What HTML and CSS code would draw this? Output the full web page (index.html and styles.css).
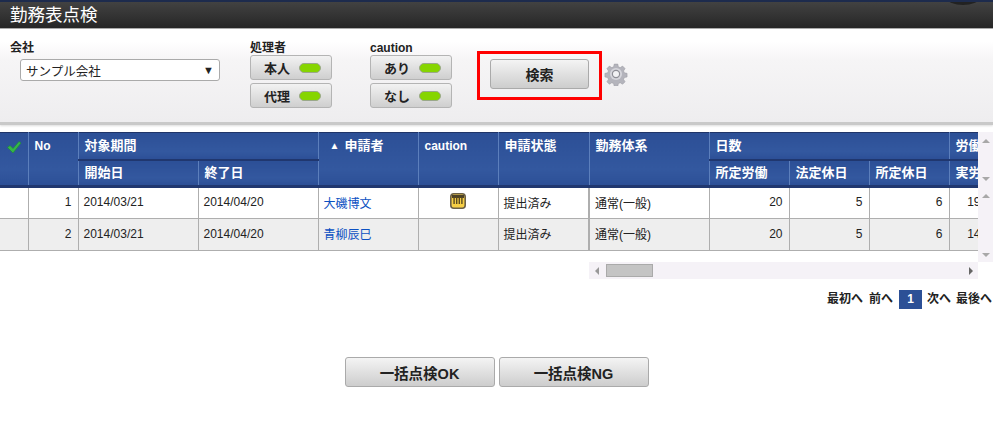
FILE: index.html
```html
<!DOCTYPE html>
<html lang="ja">
<head>
    <meta charset="UTF-8">
    <title>勤務表点検</title>
    <link rel="stylesheet" href="styles.css">
</head>
<body>
    <header class="title-bar">
        <h1 class="title">勤務表点検</h1>
        <span class="title-knob"></span>
    </header>

    <form class="filter">
        <div class="filter-group company">
            <label class="filter-label">会社</label>
            <div class="select"><span>サンプル会社</span><span class="select-arrow">▼</span></div>
        </div>
        <div class="filter-group handler">
            <label class="filter-label">処理者</label>
            <button type="button" class="toggle">本人<i class="lamp"></i></button>
            <button type="button" class="toggle">代理<i class="lamp"></i></button>
        </div>
        <div class="filter-group caution">
            <label class="filter-label">caution</label>
            <button type="button" class="toggle">あり<i class="lamp"></i></button>
            <button type="button" class="toggle">なし<i class="lamp"></i></button>
        </div>
        <div class="search-mark"><button type="button" class="btn search-btn">検索</button></div>
        <svg class="gear" width="24" height="24" viewBox="0 0 24 24" aria-label="設定">
            <path fill="#b4b4bc" stroke="#9a9aa2" stroke-width="0.6" d="M10 1h4l.6 3 2.1.9 2.6-1.7 2.8 2.8-1.7 2.6.9 2.1 3 .6v4l-3 .6-.9 2.1 1.7 2.6-2.8 2.8-2.6-1.7-2.1.9-.6 3h-4l-.6-3-2.1-.9-2.6 1.7-2.8-2.8 1.7-2.6-.9-2.1-3-.6v-4l3-.6.9-2.1-1.7-2.6 2.8-2.8 2.6 1.7 2.1-.9z" transform="translate(1.2 1.2) scale(.9)"/>
            <circle cx="12" cy="12" r="6" fill="#d6d6dc"/>
            <circle cx="12" cy="12" r="3.6" fill="#f2f2f4" stroke="#8e8e96" stroke-width="1.2"/>
        </svg>
    </form>

    <div class="grid">
        <div class="grid-clip">
            <table class="list">
                <colgroup>
                    <col class="c-check"><col class="c-no"><col class="c-date"><col class="c-date">
                    <col class="c-name"><col class="c-caution"><col class="c-state"><col class="c-system">
                    <col class="c-day"><col class="c-day"><col class="c-day"><col class="c-last">
                </colgroup>
                <thead>
                    <tr class="head-top">
                        <th rowspan="2" class="check-head">
                            <svg width="16" height="14" viewBox="0 0 16 14"><path d="M1.5 7.5l2.5-2 3 3L13 1.5l2 1.5-8 10z" fill="#35b548" stroke="#1c8a34" stroke-width=".6"/></svg>
                        </th>
                        <th rowspan="2" class="latin">No</th>
                        <th colspan="2" class="group">対象期間</th>
                        <th rowspan="2" class="name-head"><span class="sort">▲</span>申請者</th>
                        <th rowspan="2" class="latin">caution</th>
                        <th rowspan="2">申請状態</th>
                        <th rowspan="2">勤務体系</th>
                        <th colspan="3" class="group">日数</th>
                        <th class="group">労働</th>
                    </tr>
                    <tr class="head-sub">
                        <th>開始日</th><th>終了日</th>
                        <th>所定労働</th><th>法定休日</th><th>所定休日</th><th>実労</th>
                    </tr>
                </thead>
                <tbody>
                    <tr>
                        <td></td><td class="num">1</td><td>2014/03/21</td><td>2014/04/20</td>
                        <td><a href="#">大磯博文</a></td>
                        <td class="center">
                            <svg class="caution-icon" width="16" height="16" viewBox="0 0 16 16">
                                <rect x=".8" y=".8" width="14.4" height="14.4" rx="3" fill="#f7cf45" stroke="#6b6048" stroke-width="1.6"/>
                                <rect x="2" y="2" width="12" height="3" fill="#4d4226"/>
                                <path d="M3.4 4h1.4v7H3.4zM6 4h1.4v7H6zM8.6 4H10v7H8.6zM11.2 4h1.4v7h-1.4z" fill="#5a4a20"/>
                            </svg>
                        </td>
                        <td>提出済み</td><td class="thick">通常(一般)</td>
                        <td class="num">20</td><td class="num">5</td><td class="num">6</td><td class="num">19</td>
                    </tr>
                    <tr class="alt">
                        <td></td><td class="num">2</td><td>2014/03/21</td><td>2014/04/20</td>
                        <td><a href="#">青柳辰巳</a></td>
                        <td></td>
                        <td>提出済み</td><td class="thick">通常(一般)</td>
                        <td class="num">20</td><td class="num">5</td><td class="num">6</td><td class="num">14</td>
                    </tr>
                </tbody>
            </table>
        </div>
        <div class="vbar">
            <div class="vbar-part head-part"><span class="arrow up"></span><span class="arrow down"></span></div>
            <div class="vbar-part body-part"><span class="arrow up"></span><span class="arrow down"></span></div>
        </div>
    </div>

    <div class="hbar">
        <span class="arrow left"></span>
        <span class="hbar-thumb"></span>
        <span class="arrow right"></span>
    </div>

    <nav class="pager">
        <span class="page-first">最初へ</span><span>前へ</span><span class="page-now">1</span><span>次へ</span><span>最後へ</span>
    </nav>

    <div class="actions">
        <button type="button" class="btn bulk-btn">一括点検OK</button>
        <button type="button" class="btn bulk-btn">一括点検NG</button>
    </div>
</body>
</html>
```

FILE: styles.css
```css
body {
    margin: 0;
    height: 428px;
    overflow: hidden;
    background: #fff;
    color: #222;
    font-family: "Liberation Sans", "Noto Sans CJK JP", sans-serif;
    font-size: 12px;
}

button {
    font-family: inherit;
    cursor: pointer;
}

/* Title bar */
.title-bar {
    position: relative;
    height: 26px;
    border-top: 2px solid #1d2b4d;
    border-bottom: 1px solid #aaa;
    background: linear-gradient(#424242, #262626);
    overflow: hidden;
}

.title {
    margin: 0;
    padding-left: 10px;
    color: #fff;
    font-size: 17.5px;
    font-weight: normal;
    line-height: 26px;
}

.title-knob {
    position: absolute;
    top: -10px;
    left: 947px;
    width: 32px;
    height: 13px;
    border-radius: 50%;
    background: #222;
}

/* Filter panel */
.filter {
    display: flex;
    align-items: flex-start;
    height: 93px;
    border-bottom: 3px solid #c9c9c9;
    background: linear-gradient(#fff 12px, #f6f5f6 30px, #eeedef);
    box-shadow: 0 1px 2px #ddd;
}

.filter-group {
    display: flex;
    flex-direction: column;
    align-items: flex-start;
    padding-top: 12px;
}

.filter-label {
    height: 14px;
    font-size: 12px;
    font-weight: bold;
    line-height: 14px;
}

.company {
    width: 250px;
    padding-left: 10px;
    box-sizing: border-box;
}

.handler {
    width: 120px;
}

.caution {
    width: 82px;
}

.select {
    display: flex;
    justify-content: space-between;
    align-items: center;
    box-sizing: border-box;
    width: 200px;
    height: 22px;
    margin: 4px 0 0 10px;
    padding: 0 5px 0 5px;
    border: 1px solid #aaa;
    border-radius: 3px;
    background: #fff;
    font-size: 12.5px;
}

.select-arrow {
    font-size: 11px;
}

.toggle {
    display: flex;
    justify-content: flex-end;
    align-items: center;
    gap: 9px;
    box-sizing: border-box;
    width: 82px;
    height: 25px;
    margin: 0 0 3px;
    padding: 0 10px 0 0;
    border: 1px solid #b4b4b4;
    border-radius: 3px;
    background: linear-gradient(#f2f2f2, #cfcfcf);
    color: #222;
    font-size: 13px;
    font-weight: bold;
}

.lamp {
    width: 20px;
    height: 8px;
    border: 1px solid #9aa88a;
    border-radius: 5px;
    background: #86d500;
}

.search-mark {
    box-sizing: border-box;
    width: 125px;
    height: 49px;
    margin: 22px 0 0 25px;
    padding: 5px 10px;
    border: 3px solid #f00;
}

.btn {
    border: 1px solid #aaa;
    border-radius: 3px;
    background: linear-gradient(#f4f4f4, #cdcdcd);
    color: #222;
    font-weight: bold;
}

.search-btn {
    display: block;
    width: 100%;
    height: 30px;
    padding: 0;
    font-size: 14px;
}

.gear {
    margin: 33px 0 0 2px;
}

/* Table */
.grid {
    display: flex;
    align-items: flex-start;
    margin-top: 7px;
}

.grid-clip {
    width: 978px;
    overflow: hidden;
}

.list {
    width: 987px;
    border-collapse: collapse;
    table-layout: fixed;
}

.c-check { width: 28px; }
.c-no { width: 50px; }
.c-date { width: 120px; }
.c-name { width: 100px; }
.c-caution { width: 80px; }
.c-state { width: 91px; }
.c-system { width: 120px; }
.c-day { width: 80px; }
.c-last { width: 38px; }

.list th {
    padding: 0 0 0 6px;
    border: 1px solid #5c7fbc;
    border-top: 0;
    border-bottom: 0;
    background: linear-gradient(#2c4f96, #33589f 70%, #2c4f96);
    color: #fff;
    font-size: 13px;
    font-weight: bold;
    line-height: 14px;
    text-align: left;
    vertical-align: top;
}

.list th.latin {
    font-size: 12px;
}

.list thead {
    border-top: 1px solid #1f3468;
    border-bottom: 3px solid #20376f;
}

.head-top th {
    height: 27px;
    padding-top: 6px;
    box-sizing: border-box;
}

.head-sub th {
    height: 27px;
    padding-top: 5px;
    box-sizing: border-box;
    border-top: 2px solid #20376f;
}

.list .head-top .group {
    border-bottom: 2px solid #20376f;
}

.list .check-head {
    padding: 7px 0 0 6px;
}

.list .name-head {
    padding-left: 11px;
}

.sort {
    margin-right: 5px;
    font-size: 10px;
    vertical-align: 1px;
}

.list td {
    height: 32px;
    box-sizing: border-box;
    padding: 0 5px 2px;
    border: 1px solid #aeaeae;
    border-top: 0;
    overflow: hidden;
    font-size: 12px;
    white-space: nowrap;
}

.list tr > :first-child {
    border-left: 0;
}

.list .alt td {
    background: #eee;
}

.list .num {
    padding-right: 6px;
    text-align: right;
}

.list .center {
    text-align: center;
}

.list td.thick {
    border-left-width: 2px;
}

.list a {
    color: #0b50c2;
    text-decoration: none;
}

.caution-icon {
    display: block;
    margin: 0 auto 2px;
}

/* Scrollbars */
.vbar {
    width: 15px;
    background: #f5f2f7;
}

.vbar-part {
    display: flex;
    flex-direction: column;
    justify-content: space-between;
    align-items: center;
    box-sizing: border-box;
}

.head-part {
    height: 55px;
    padding: 7px 0 6px;
}

.body-part {
    height: 75px;
    padding: 7px 0 5px;
}

.arrow {
    display: block;
    width: 0;
    height: 0;
    border: 4px solid transparent;
}

.arrow.up {
    border-top: 0;
    border-bottom: 4px solid #a8a8a8;
}

.arrow.down {
    border-bottom: 0;
    border-top: 4px solid #a8a8a8;
}

.arrow.left {
    border-left: 0;
    border-right: 4px solid #999;
}

.arrow.right {
    margin-left: auto;
    border-right: 0;
    border-left: 4px solid #666;
}

.hbar {
    display: flex;
    align-items: center;
    box-sizing: border-box;
    width: 389px;
    height: 17px;
    margin: 0 0 0 589px;
    padding: 0 5px 0 6px;
    background: #f5f2f7;
}

.hbar-thumb {
    box-sizing: border-box;
    width: 47px;
    height: 13px;
    margin-left: 7px;
    border: 1px solid #aaa;
    background: #c4c4c4;
}

/* Pager */
.pager {
    display: flex;
    justify-content: flex-end;
    align-items: center;
    gap: 5px;
    margin: 11px 0 0;
    padding-right: 1px;
    font-size: 12px;
    font-weight: bold;
    line-height: 19px;
}

.page-first {
    margin-right: 1px;
}

.page-now {
    width: 23px;
    margin-left: 1px;
    background: #2c5096;
    color: #fff;
    text-align: center;
}

/* Bulk actions */
.actions {
    display: flex;
    justify-content: center;
    gap: 4px;
    margin-top: 48px;
}

.bulk-btn {
    width: 150px;
    height: 30px;
    padding: 0;
    font-size: 14.5px;
}
```
